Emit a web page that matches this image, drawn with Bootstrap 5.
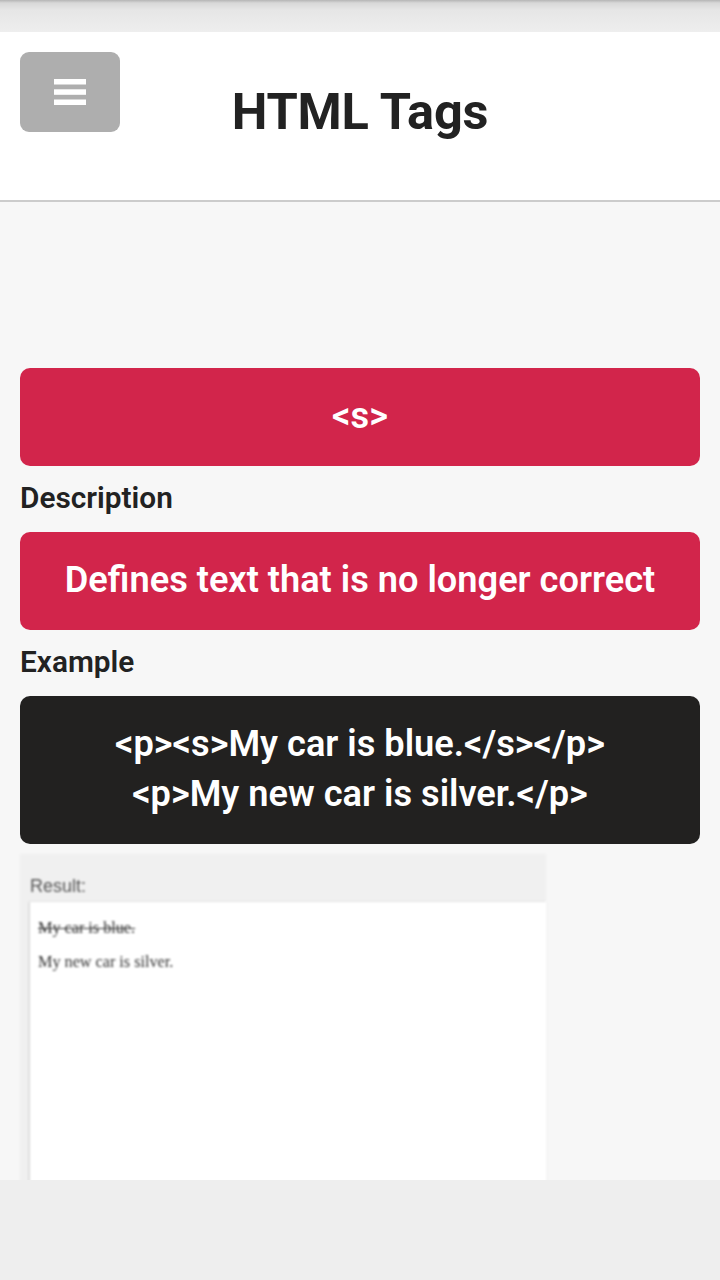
<!DOCTYPE html>
<html lang="en"><head><meta charset="utf-8"><title>HTML Tags</title>
<link rel="stylesheet" href="https://cdn.jsdelivr.net/npm/bootstrap@5.3.0/dist/css/bootstrap.min.css">
<style>
html,body{height:1280px;overflow:hidden;margin:0}
body{background:#eeeeee;font-family:Roboto,"Liberation Sans",sans-serif;color:#222}
.shell{height:1180px;overflow:hidden;background:#f7f7f7}
.statusbar{height:32px;background:linear-gradient(#b5b5b5 0,#d8d8d8 3px,#e6e6e6 10px,#eeeeee 100%)}
.topbar{height:170px;background:#fff;border-bottom:2px solid #ccc;position:relative}
.menu-btn{position:absolute;left:20px;top:20px;width:100px;height:80px;background:#aeaeae;border-radius:9px;border:0;padding:0}
.topbar h1{font-size:50.5px;font-weight:700;line-height:160px;margin:0;text-align:center;color:#222;letter-spacing:-.2px}
.content{padding:166px 20px 0}
.panel{border-radius:10px;color:#fff;font-size:36.2px;font-weight:600;line-height:50px;text-align:center;padding:23px 0 25px}
.panel-red{background:#d2254b}
.panel-dark{background:#222120}
.lbl{font-size:29.8px;font-weight:600;line-height:34px;margin:15px 0 17px;color:#222}
.shot{width:526px;height:340px;background:#f0f0f0;margin-top:10px;padding:20px 0 0 10px;font-family:"Liberation Sans",sans-serif;font-size:18px;line-height:24px;color:#555;filter:blur(1px)}
.shot-body{background:#fff;height:300px;margin-top:4px;padding:16px 8px;font-family:"Liberation Serif",serif;font-size:16.2px;line-height:20px;color:#333;box-shadow:-1px 0 2px #ccc}
.shot-body p{margin:0 0 14px}
</style></head><body>
<div class="shell">
<div class="statusbar"></div>
<div class="topbar">
<button class="menu-btn d-flex align-items-center justify-content-center" aria-label="menu"><svg width="32" height="26" viewBox="0 0 32 26"><g fill="#fff"><rect y="0" width="32" height="5.5"/><rect y="10.3" width="32" height="5.5"/><rect y="20.5" width="32" height="5.5"/></g></svg></button>
<h1>HTML Tags</h1>
</div>
<div class="content">
<div class="panel panel-red">&lt;s&gt;</div>
<div class="lbl">Description</div>
<div class="panel panel-red">Defines text that is no longer correct</div>
<div class="lbl">Example</div>
<div class="panel panel-dark">&lt;p&gt;&lt;s&gt;My car is blue.&lt;/s&gt;&lt;/p&gt;<br>&lt;p&gt;My new car is silver.&lt;/p&gt;</div>
<div class="shot">Result:
<div class="shot-body"><p><s>My car is blue.</s></p><p>My new car is silver.</p></div>
</div>
</div>
</div>
</body></html>
